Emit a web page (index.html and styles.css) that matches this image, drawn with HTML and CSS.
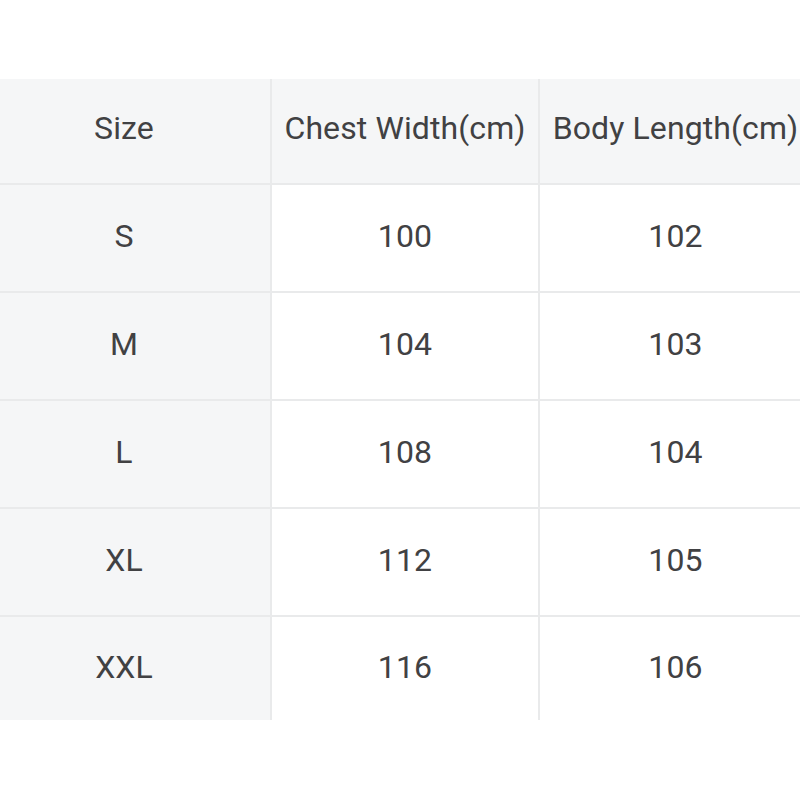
FILE: index.html
```html
<!DOCTYPE html>
<html>
<head>
<meta charset="utf-8">
<link rel="stylesheet" href="styles.css">
</head>
<body>
<div class="page">
  <table class="sizes">
    <colgroup>
      <col class="c1"><col class="c2"><col class="c3">
    </colgroup>
    <thead>
      <tr><th>Size</th><th>Chest Width(cm)</th><th>Body Length(cm)</th></tr>
    </thead>
    <tbody>
      <tr><th>S</th><td>100</td><td>102</td></tr>
      <tr><th>M</th><td>104</td><td>103</td></tr>
      <tr><th>L</th><td>108</td><td>104</td></tr>
      <tr><th>XL</th><td>112</td><td>105</td></tr>
      <tr class="last"><th>XXL</th><td>116</td><td>106</td></tr>
    </tbody>
  </table>
</div>
</body>
</html>
```

FILE: styles.css
```css
html, body {
  margin: 0;
  padding: 0;
  background: #ffffff;
  overflow: hidden;
  width: 800px;
  height: 800px;
}
.page {
  padding-top: 79px;
}
.sizes {
  margin-left: -22px;
  width: 833px;
  table-layout: fixed;
  border-collapse: collapse;
  font-family: Roboto, "Liberation Sans", sans-serif;
  font-size: 32px;
  letter-spacing: 0.1px;
  color: #414143;
}
.c1 { width: 293px; }
.c2 { width: 268px; }
.c3 { width: 272px; }
.sizes th, .sizes td {
  font-weight: 400;
  text-align: center;
  vertical-align: middle;
  padding: 0 0 4px 0;
  border: 2px solid #e9eaeb;
  white-space: nowrap;
}
.sizes thead th {
  background: #f5f6f7;
  height: 98px;
  padding-bottom: 6px;
  border-top: none;
}
.sizes tbody th {
  background: #f5f6f7;
}
.sizes tbody td {
  background: #ffffff;
}
.sizes tbody tr { height: 108px; }
.sizes tbody tr.last { height: 104px; }
.sizes tbody tr.last th, .sizes tbody tr.last td { border-bottom: none; }
.sizes th:first-child { border-left: none; }
.sizes th:last-child, .sizes td:last-child { border-right: none; }
```
